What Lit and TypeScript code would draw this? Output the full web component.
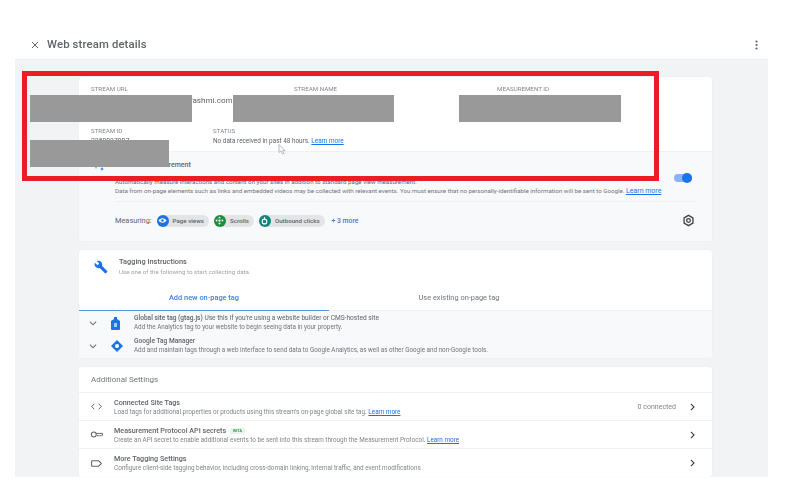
import { LitElement, html, css, svg } from "lit";
import { customElement } from "lit/decorators.js";

const ic = (w: number, body: unknown, vb = 24) =>
  html`<svg width=${w} height=${w} viewBox="0 0 ${vb} ${vb}">${body}</svg>`;

const chevron = ic(12, svg`<path d="M8.6 5 7 6.6 12.4 12 7 17.4 8.6 19l7-7z" fill="#3c4043"/>`);
const down = ic(12, svg`<path d="M6.5 8.5 12 14l5.500-5.500L19 10l-7 7-7-7z" fill="#70757a"/>`);

@customElement("app-root")
export class AppRoot extends LitElement {
  static styles = css`
    :host { display: block; width: 790px; height: 496px; background: #fff; font-family: Roboto, "Liberation Sans", sans-serif; color: #5f6368; overflow: hidden; position: relative; }
    .page { filter: blur(0.5px); height: 496px; display: flex; flex-direction: column; }
    a { color: #1a73e8; text-decoration: underline; }
    svg { display: block; flex: none; }
    header { height: 30px; margin: 30px 22px 0 15px; padding-left: 14px; display: flex; align-items: center; gap: 6px; border-bottom: 1px solid #eceef0; box-sizing: border-box; }
    header h1 { margin: 0; font-size: 11.3px; font-weight: 500; color: #5f6368; letter-spacing: .15px; flex: 1; }
    header .more { margin-right: 10px; }
    main { background: #f1f3f5; margin: 0 22px 0 15px; padding: 17px 56px 0 64px; display: flex; flex-direction: column; gap: 9px; height: 417px; box-sizing: border-box; }
    .card { background: #fff; border-radius: 3px; box-shadow: 0 0 1px #dfe1e5; overflow: hidden; }
    .info { height: 75px; box-sizing: border-box; padding: 8px 12px 0; display: grid; grid-template-columns: 122px 81px 203px 1fr; grid-template-rows: 34px auto; border-bottom: 1px solid #eef0f2; }
    .lbl { font-size: 6.2px; text-transform: uppercase; color: #80868b; line-height: 8px; white-space: nowrap; }
    .val { font-size: 8.1px; line-height: 11px; color: #5f6368; white-space: nowrap; margin-top: 2px; }
    .url { grid-column: 1 / span 2; }
    .name { grid-column: 3; }
    .mid { grid-column: 4; }
    .sid { grid-column: 1; margin-top: 8px; }
    .sid .val { font-size: 6.800px; margin-top: 1px; }
    .status { grid-column: 2 / span 3; margin-top: 8px; }
    .status .val { font-size: 6.400px; margin-top: 1px; }
    .enh { background: #f8f9fb; height: 89px; box-sizing: border-box; padding: 7px 17px 0 36px; position: relative; }
    .spark { position: absolute; left: 12px; top: 7px; }
    .enh h2 { margin: 0; font-size: 7px; font-weight: 500; line-height: 12px; color: #5f6368; }
    .enh p { margin: 0; font-size: 6.200px; line-height: 9px; color: #70757a; white-space: nowrap; }
    .enh p:first-of-type { margin-top: 7px; color: #5f6368; }
    .enh p a { font-size: 7px; }
    .toggle { position: absolute; right: 20px; top: 22px; width: 18px; height: 8px; border-radius: 4px; background: #8ab4f8; }
    .toggle i { position: absolute; right: 0; top: -1px; width: 10px; height: 10px; border-radius: 50%; background: #1a73e8; }
    .measuring { display: flex; align-items: center; margin-top: 5px; border-top: 1px solid #eef0f2; height: 37px; font-size: 7.400px; gap: 5px; }
    .chip { display: flex; align-items: center; gap: 4px; height: 12px; border-radius: 6px; background: #e3e4e6; padding-right: 5px; font-size: 6.200px; font-weight: 500; }
    .dot { width: 12px; height: 12px; border-radius: 50%; display: flex; align-items: center; justify-content: center; }
    .plus { color: #4a76c8; font-weight: 500; font-size: 6.800px; flex: 1; margin-left: 2px; }
    .tag-head { height: 43px; padding: 6px 0 0 15px; display: flex; gap: 11px; box-sizing: border-box; }
    .tag-head > svg { margin-top: 4px; }
    .tag-head h3 { margin: 0; font-size: 7.400px; font-weight: 500; line-height: 11px; color: #5f6368; }
    .tag-head p { margin: 1px 0 0; font-size: 6.200px; line-height: 8px; color: #a0a4a9; }
    .tabs { display: grid; grid-template-columns: 250px 260px 1fr; height: 17px; font-size: 7.400px; text-align: center; border-bottom: 1px solid #eef0f2; }
    .tabs div:first-child { color: #3f7fdc; border-bottom: 1px solid #5a94e8; font-weight: 500; height: 17px; }
    .tabs div:last-child { color: #70757a; }
    .tag-body { background: #f8f9fb; height: 47px; overflow: hidden; }
    .opt { display: grid; grid-template-columns: 24px 23px 1fr; padding-left: 8px; height: 24px; align-items: center; }
    .opt + .opt { margin-top: -1px; }
    .opt b { font-size: 6.600px; font-weight: 500; line-height: 9px; color: #5f6368; display: block; }
    .opt b span { font-weight: 400; }
    .opt em { font-style: normal; font-size: 6.300px; line-height: 9px; display: block; color: #70757a; white-space: nowrap; }
    .opt .i { display: flex; }
    .settings .top { height: 26px; padding-left: 12px; display: flex; align-items: center; font-size: 8px; color: #70757a; border-bottom: 1px solid #eef0f2; box-sizing: border-box; }
    .row { height: 28px; box-sizing: border-box; border-bottom: 1px solid #eef0f2; display: flex; align-items: center; padding: 0 13px 0 11px; }
    .row:last-child { border-bottom: 0; }
    .row .ri { width: 24px; }
    .row .txt { flex: 1; padding-top: 1px; }
    .row b { display: block; font-size: 7.200px; font-weight: 500; line-height: 10px; color: #5f6368; }
    .row em { display: block; font-style: normal; font-size: 6.350px; line-height: 9px; color: #80868b; white-space: nowrap; }
    .beta { display: inline-block; font-size: 3.600px; line-height: 6px; padding: 0 3px; margin-left: 4px; background: #e6f4ea; color: #188038; vertical-align: 1px; }
    .conn { font-size: 7px; color: #80868b; margin-right: 11px; }
    .hide { position: absolute; background: #999; }
    .h1 { left: 30px; top: 95px; width: 162px; height: 27px; }
    .h2 { left: 233px; top: 95px; width: 161px; height: 27px; }
    .h3 { left: 459px; top: 95px; width: 162px; height: 27px; }
    .h4 { left: 30px; top: 140px; width: 139px; height: 27px; }
    .frame { position: absolute; left: 22px; top: 71px; width: 637px; height: 110px; box-sizing: border-box; border: 5px solid #ed1c24; }
    .cursor { position: absolute; left: 278px; top: 144px; }
  `;

  render() {
    return html`
      <div class="page">
        <header>
          ${ic(12, svg`<path d="M6 6l12 12M18 6 6 18" stroke="#5f6368" stroke-width="2"/>`)}
          <h1>Web stream details</h1>
          <svg class="more" width="3" height="10" viewBox="0 0 3 10"><g fill="#5f6368"><circle cx="1.5" cy="1.5" r="1.1"/><circle cx="1.5" cy="5" r="1.1"/><circle cx="1.5" cy="8.5" r="1.1"/></g></svg>
        </header>
        <main>
          <section class="card">
            <div class="info">
              <div class="url"><div class="lbl">Stream URL</div><div class="val">https://www.blogs.sandeeprashmi.com</div></div>
              <div class="name"><div class="lbl">Stream name</div><div class="val">Stream</div></div>
              <div class="mid"><div class="lbl">Measurement ID</div><div class="val">G-0000000000</div></div>
              <div class="sid"><div class="lbl">Stream ID</div><div class="val">2250037907</div></div>
              <div class="status"><div class="lbl">Status</div><div class="val">No data received in past 48 hours. <a>Learn more</a></div></div>
            </div>
            <div class="enh">
              <svg class="spark" width="14" height="14" viewBox="0 0 14 14"><path d="M5 2l1 3 3 1-3 1-1 3-1-3-3-1 3-1z M11 8l.6 1.400L13 10l-1.400.6L11 12l-.6-1.400L9 10l1.400-.6z" fill="#1a73e8"/></svg>
              <h2>Enhanced measurement</h2>
              <p>Automatically measure interactions and content on your sites in addition to standard page view measurement.</p>
              <p>Data from on-page elements such as links and embedded videos may be collected with relevant events. You must ensure that no personally-identifiable information will be sent to Google. <a>Learn more</a></p>
              <div class="toggle"><i></i></div>
              <div class="measuring">
                <span>Measuring:</span>
                <span class="chip"><span class="dot" style="background:#1a73e8">${ic(9, svg`<path d="M12 6C7 6 3 9 1.500 12 3 15 7 18 12 18s9-3 10.500-6C21 9 17 6 12 6z" fill="#fff"/><circle cx="12" cy="12" r="3.500" fill="#1a73e8"/>`)}</span>Page views</span>
                <span class="chip"><span class="dot" style="background:#1e8e3e">${ic(9, svg`<path d="M12 1l4 5H8zM12 23l-4-5h8zM1 12l5-4v8zM23 12l-5 4V8z" fill="#fff"/><circle cx="12" cy="12" r="3" fill="#fff"/>`)}</span>Scrolls</span>
                <span class="chip"><span class="dot" style="background:#12867a">${ic(9, svg`<rect x="6" y="8" width="12" height="13" rx="6" fill="none" stroke="#fff" stroke-width="3"/><path d="M12 3v8" stroke="#fff" stroke-width="3"/>`)}</span>Outbound clicks</span>
                <span class="plus">+ 3 more</span>
                ${ic(13, svg`<path d="M12 2.500l8.200 4.750v9.500L12 21.500l-8.200-4.750v-9.500z" fill="none" stroke="#3c4043" stroke-width="2.400"/><circle cx="12" cy="12" r="3.400" fill="none" stroke="#3c4043" stroke-width="2.400"/>`)}
              </div>
            </div>
          </section>

          <section class="card">
            <div class="tag-head">
              ${ic(14, svg`<path d="M22.700 19l-9.100-9.100c.9-2.300.4-5-1.500-6.900-2-2-5-2.400-7.400-1.300L9 6 6 9 1.600 4.700C.4 7.100.9 10.100 2.900 12.100c1.900 1.900 4.600 2.400 6.900 1.500l9.100 9.100c.4.4 1 .4 1.400 0l2.300-2.300c.5-.4.5-1.100.1-1.400z" fill="#1a73e8"/>`)}
              <div><h3>Tagging Instructions</h3><p>Use one of the following to start collecting data.</p></div>
            </div>
            <div class="tabs"><div>Add new on-page tag</div><div>Use existing on-page tag</div></div>
            <div class="tag-body">
              <div class="opt">
                <span class="i">${down}</span>
                <span class="i"><svg width="9" height="13" viewBox="0 0 9 13"><path d="M3 0h3v2l3 2v8a1 1 0 0 1-1 1H1a1 1 0 0 1-1-1V4l3-2z" fill="#1a73e8"/><rect x="3" y="6" width="3" height="4" fill="#a8c7fa"/></svg></span>
                <span><b>Global site tag (gtag.js) <span>Use this if you're using a website builder or CMS-hosted site</span></b><em>Add the Analytics tag to your website to begin seeing data in your property.</em></span>
              </div>
              <div class="opt">
                <span class="i">${down}</span>
                <span class="i"><svg width="12" height="12" viewBox="0 0 12 12"><path d="M6 0l6 6-6 6-6-6z" fill="#1a73e8"/><circle cx="6" cy="6" r="2" fill="#fff"/></svg></span>
                <span><b>Google Tag Manager</b><em>Add and maintain tags through a web interface to send data to Google Analytics, as well as other Google and non-Google tools.</em></span>
              </div>
            </div>
          </section>

          <section class="card settings">
            <div class="top">Additional Settings</div>
            <div class="row">
              <span class="ri">${ic(13, svg`<path d="M8 7l-5 5 5 5M16 7l5 5-5 5" fill="none" stroke="#5f6368" stroke-width="1.800"/><path d="M11 12h.01M13 12h.01" stroke="#5f6368" stroke-width="1.800"/>`)}</span>
              <span class="txt"><b>Connected Site Tags</b><em>Load tags for additional properties or products using this stream's on-page global site tag. <a>Learn more</a></em></span>
              <span class="conn">0 connected</span>${chevron}
            </div>
            <div class="row">
              <span class="ri">${ic(13, svg`<circle cx="7" cy="12" r="4.500" fill="none" stroke="#5f6368" stroke-width="2"/><path d="M11.500 10H23v3l-2 2-1.500-1.500L18 15l-1.500-1.500L15 15l-2-2" fill="none" stroke="#5f6368" stroke-width="1.800"/>`)}</span>
              <span class="txt"><b>Measurement Protocol API secrets<span class="beta">BETA</span></b><em>Create an API secret to enable additional events to be sent into this stream through the Measurement Protocol. <a>Learn more</a></em></span>
              ${chevron}
            </div>
            <div class="row">
              <span class="ri">${ic(13, svg`<path d="M4 7h12l5 5-5 5H4a1 1 0 0 1-1-1V8a1 1 0 0 1 1-1z" fill="none" stroke="#5f6368" stroke-width="2"/>`)}</span>
              <span class="txt"><b>More Tagging Settings</b><em>Configure client-side tagging behavior, including cross-domain linking, internal traffic, and event modifications</em></span>
              ${chevron}
            </div>
          </section>
        </main>
      </div>
      <svg class="cursor" width="8" height="11" viewBox="0 0 8 11"><path d="M1 .5v8l2-1.500 1.500 3 1.500-.7L4.500 6.500H7z" fill="#fff" stroke="#9aa0a6" stroke-width=".7"/></svg>
      <div class="hide h1"></div><div class="hide h2"></div><div class="hide h3"></div><div class="hide h4"></div>
      <div class="frame"></div>
    `;
  }
}
